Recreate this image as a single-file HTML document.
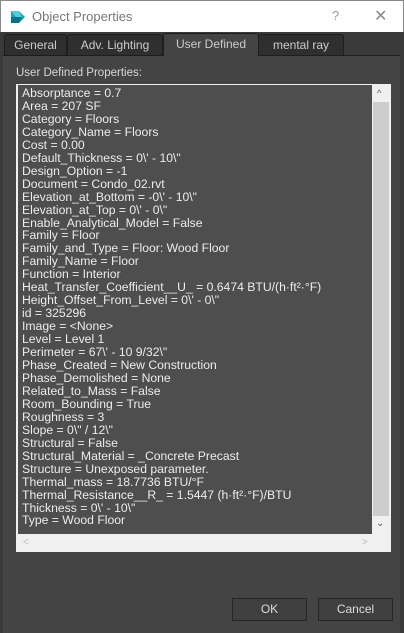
<!DOCTYPE html>
<html><head><style>
*{margin:0;padding:0;box-sizing:border-box}
body{width:404px;height:633px;background:#3a3a3a;font-family:"Liberation Sans",sans-serif;position:relative;overflow:hidden}
.title{position:absolute;left:0;top:0;width:404px;height:32px;background:#fff;border:1px solid #888;border-bottom:none}
.title .t{position:absolute;left:31px;top:8px;font-size:13px;color:#777}
.title .q{position:absolute;left:331px;top:7px;font-size:13px;color:#999}
.title .x{position:absolute;left:373px;top:5px;font-size:16px;color:#888}
.tabbar{position:absolute;left:0;top:32px;width:404px;height:23px;background:#3a3a3a}
.tab{position:absolute;top:34px;height:21px;background:#2f2f2f;border:1px solid #1e1e1e;border-bottom:none;border-radius:3px 3px 0 0;color:#ccc;font-size:12px;text-align:center;line-height:20px}
.panel{position:absolute;left:3px;top:55px;width:397px;height:578px;background:#444;border-top:1px solid #1e1e1e}
.lbl{position:absolute;left:16px;top:67px;font-size:11.5px;color:#d8d8d8}
.box{position:absolute;left:16px;top:84px;width:375px;height:468px;border:1px solid #f0f0f0;background:#f0f0f0}
.txt{position:absolute;left:1px;top:0;width:354px;height:449px;background:#4e4e4e;color:#ececec;font-size:12.2px;line-height:12.95px;padding:2px 0 0 4px;white-space:pre;overflow:hidden}
.vs{position:absolute;left:355px;top:0;width:18px;height:449px;background:#f0f0f0}
.thumb{position:absolute;left:1px;top:17px;width:16px;height:414px;background:#cdcdcd}
.btn{position:absolute;top:598px;height:23px;background:#3f3f3f;border:1px solid #262626;color:#ddd;font-size:12px;text-align:center;line-height:21px}
</style></head><body>
<div class="title">
<svg style="position:absolute;left:9px;top:8px" width="16" height="16"><polygon points="1,2 9,2 15,8 9,14 1,14" fill="#1aa2b8"/><polygon points="1,2 9,2 12,8 6,8" fill="#4bd0de"/><polygon points="1,8 12,8 9,14 1,14" fill="#0e6f82"/></svg>
<div class="t">Object Properties</div><div class="q">?</div><div class="x">✕</div></div>
<div class="tabbar"></div>
<div class="tab" style="left:4px;width:63px">General</div>
<div class="tab" style="left:67px;width:96px">Adv. Lighting</div>
<div class="tab" style="left:258px;width:86px">mental ray</div>
<div class="panel"></div>
<div class="tab" style="left:163px;width:96px;top:33px;height:23px;background:#444;border-color:#1e1e1e">User Defined</div>
<div class="lbl">User Defined Properties:</div>
<div class="box">
<div class="txt">Absorptance = 0.7
Area = 207 SF
Category = Floors
Category_Name = Floors
Cost = 0.00
Default_Thickness = 0\' - 10\"
Design_Option = -1
Document = Condo_02.rvt
Elevation_at_Bottom = -0\' - 10\"
Elevation_at_Top = 0\' - 0\"
Enable_Analytical_Model = False
Family = Floor
Family_and_Type = Floor: Wood Floor
Family_Name = Floor
Function = Interior
Heat_Transfer_Coefficient__U_ = 0.6474 BTU/(h·ft²·°F)
Height_Offset_From_Level = 0\' - 0\"
id = 325296
Image = &lt;None&gt;
Level = Level 1
Perimeter = 67\' - 10 9/32\"
Phase_Created = New Construction
Phase_Demolished = None
Related_to_Mass = False
Room_Bounding = True
Roughness = 3
Slope = 0\" / 12\"
Structural = False
Structural_Material = _Concrete Precast
Structure = Unexposed parameter.
Thermal_mass = 18.7736 BTU/°F
Thermal_Resistance__R_ = 1.5447 (h·ft²·°F)/BTU
Thickness = 0\' - 10\"
Type = Wood Floor</div>
<div class="vs"><div class="thumb"></div>
<div style="position:absolute;left:5px;top:3px;font-size:9px;color:#555">&#94;</div>
<div style="position:absolute;left:4px;top:433px;font-size:10px;color:#555">&#8964;</div></div>
<div style="position:absolute;left:6px;top:452px;font-size:10px;color:#bbb">&lt;</div>
<div style="position:absolute;left:345px;top:452px;font-size:10px;color:#bbb">&gt;</div>
</div>
<div class="btn" style="left:232px;width:75px">OK</div>
<div class="btn" style="left:318px;width:75px">Cancel</div>
</body></html>
